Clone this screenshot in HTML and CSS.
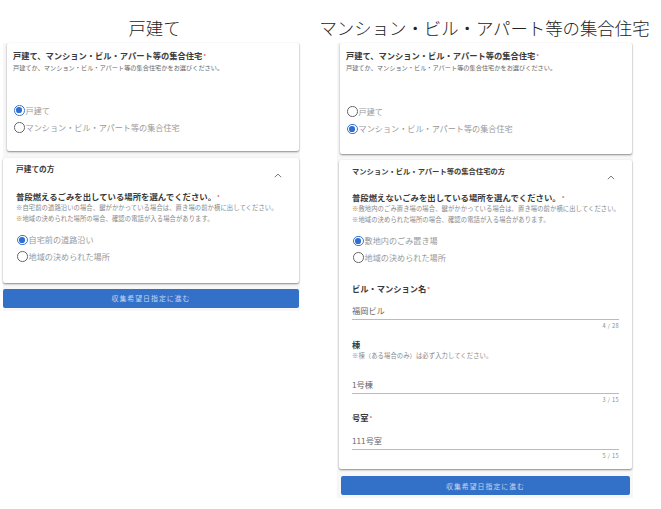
FILE: index.html
```html
<!DOCTYPE html>
<html lang="ja">
<head>
<meta charset="utf-8">
<title>戸建て / 集合住宅</title>
<link rel="stylesheet" href="styles.css">
</head>
<body>
<main class="page">
  <section class="col col-left">
    <h1 class="title">戸建て</h1>
    <div class="sheet">
      <div class="card card-type">
        <h2 class="q">戸建て、マンション・ビル・アパート等の集合住宅<span class="req">*</span></h2>
        <p class="sub">戸建てか、マンション・ビル・アパート等の集合住宅かをお選びください。</p>
        <div class="radios">
          <div class="radio on"><i class="dot"></i><span>戸建て</span></div>
          <div class="radio"><i class="dot"></i><span>マンション・ビル・アパート等の集合住宅</span></div>
        </div>
      </div>
      <div class="card panel">
        <div class="panel-head">
          <h3 class="panel-title">戸建ての方</h3>
          <svg class="chev" viewBox="0 0 10 6"><path d="M1 5 5 1.3 9 5"/></svg>
        </div>
        <h2 class="q q-big">普段燃えるごみを出している場所を選んでください。<span class="req">*</span></h2>
        <p class="note">※自宅前の道路沿いの場合、鍵がかかっている場合は、置き場の前か横に出してください。</p>
        <p class="note">※地域の決められた場所の場合、確認の電話が入る場合があります。</p>
        <div class="radios radios-panel">
          <div class="radio on"><i class="dot"></i><span>自宅前の道路沿い</span></div>
          <div class="radio"><i class="dot"></i><span>地域の決められた場所</span></div>
        </div>
      </div>
      <button class="next" type="button">収集希望日指定に進む</button>
    </div>
  </section>
  <section class="col col-right">
    <h1 class="title">マンション・ビル・アパート等の集合住宅</h1>
    <div class="sheet">
      <div class="card card-type tall">
        <h2 class="q">戸建て、マンション・ビル・アパート等の集合住宅<span class="req">*</span></h2>
        <p class="sub">戸建てか、マンション・ビル・アパート等の集合住宅かをお選びください。</p>
        <div class="radios">
          <div class="radio"><i class="dot"></i><span>戸建て</span></div>
          <div class="radio on"><i class="dot"></i><span>マンション・ビル・アパート等の集合住宅</span></div>
        </div>
      </div>
      <div class="card panel">
        <div class="panel-head">
          <h3 class="panel-title">マンション・ビル・アパート等の集合住宅の方</h3>
          <svg class="chev" viewBox="0 0 10 6"><path d="M1 5 5 1.3 9 5"/></svg>
        </div>
        <h2 class="q q-big">普段燃えないごみを出している場所を選んでください。<span class="req">*</span></h2>
        <p class="note">※敷地内のごみ置き場の場合、鍵がかかっている場合は、置き場の前か横に出してください。</p>
        <p class="note">※地域の決められた場所の場合、確認の電話が入る場合があります。</p>
        <div class="radios radios-panel">
          <div class="radio on"><i class="dot"></i><span>敷地内のごみ置き場</span></div>
          <div class="radio"><i class="dot"></i><span>地域の決められた場所</span></div>
        </div>
        <div class="field first">
          <h2 class="q">ビル・マンション名<span class="req">*</span></h2>
          <div class="input">福岡ビル</div>
          <div class="count">4 / 28</div>
        </div>
        <div class="field">
          <h2 class="q">棟</h2>
          <p class="note field-note">※棟（ある場合のみ）は必ず入力してください。</p>
          <div class="input spaced">1号棟</div>
          <div class="count">3 / 15</div>
        </div>
        <div class="field">
          <h2 class="q">号室<span class="req">*</span></h2>
          <div class="input">111号室</div>
          <div class="count">5 / 15</div>
        </div>
      </div>
      <button class="next" type="button">収集希望日指定に進む</button>
    </div>
  </section>
</main>
</body>
</html>
```
FILE: styles.css
```css
* { box-sizing: border-box; }
html, body { margin: 0; padding: 0; background: #fff; }
body {
  width: 661px;
  height: 509px;
  overflow: hidden;
  font-family: "Noto Sans CJK JP", "Noto Sans", sans-serif;
  color: #333;
}
h1, h2, h3, p { margin: 0; font-weight: normal; }
.page { display: flex; padding-left: 3px; gap: 37px; }
.col { display: flex; flex-direction: column; }
.col-left { width: 297px; }
.col-right { width: 296px; }
.title {
  height: 43px;
  padding-top: 15px;
  font-size: 17.4px;
  line-height: 25px;
  font-weight: 300;
  color: #222;
  text-align: center;
  white-space: nowrap;
}
.col-left .title { padding-left: 6px; }
.col-right .title { margin-left: -21px; margin-right: -20px; }
.sheet {
  background: #f7f7f7;
  display: flex;
  flex-direction: column;
  padding-bottom: 3px;
}
.card {
  background: #fff;
  border-radius: 2px;
  box-shadow: 0 1px 2px rgba(0, 0, 0, .45);
}
.card-type {
  margin: 0 1px 0 4px;
  height: 108px;
  padding: 7px 6px 0;
}
.card-type.tall { margin: 0 1px 0 3px; height: 111px; }
.q {
  font-size: 8.25px;
  line-height: 10px;
  font-weight: 700;
  color: #3a3a3a;
  white-space: nowrap;
}
.req { color: #e53935; font-size: 6px; margin-left: 1px; font-weight: 400; }
.sub { font-size: 6.2px; line-height: 9px; margin-top: 1px; color: #666; white-space: nowrap; }
.radios { display: flex; flex-direction: column; gap: 1.5px; margin-top: 30.5px; margin-left: 1px; }
.tall .radios { margin-top: 31.5px; margin-left: 1px; gap: 2px; }
.radio {
  display: flex;
  align-items: center;
  height: 15.5px;
  font-size: 8.15px;
  color: #999;
  white-space: nowrap;
}
.dot {
  flex: none;
  position: relative;
  width: 10.5px;
  height: 10.5px;
  border: 1.2px solid #666;
  border-radius: 50%;
  margin-right: 1px;
}
.radio.on .dot { border-color: #3a76d0; }
.radio.on .dot::after {
  content: "";
  position: absolute;
  inset: 1.4px;
  border-radius: 50%;
  background: #2f6fd0;
}
.panel { margin: 7px 1px 0 0; padding: 0 13px; }
.col-right .panel { margin: 6px 1px 0 2px; padding: 0 13px; }
.col-left .panel { height: 125px; }
.col-right .panel { height: 309px; }
.panel-head { display: flex; justify-content: space-between; height: 33px; padding-top: 6px; }
.col-right .panel-head { height: 32px; }
.panel-title { font-size: 7.7px; line-height: 10px; font-weight: 700; white-space: nowrap; color: #3a3a3a; }
.col-right .panel-title { font-size: 7.3px; }
.chev { width: 8px; height: 5px; margin: 9px 4px 0 0; }
.chev path { fill: none; stroke: #666; stroke-width: 1.1; }
.q.q-big { font-size: 8.4px; line-height: 11px; }
.q-big + .note { margin-top: -1px; }
.note { font-size: 6.3px; line-height: 11px; color: #888; white-space: nowrap; letter-spacing: .1px; }
.radios-panel { margin-top: 8px; margin-left: 1px; gap: 1px; }
.field:not(.first) { margin-top: 7.5px; }
.field.first { margin-top: 17.5px; }
.field-note { margin-top: 1px; }
.input {
  height: 18px;
  margin-top: 7.5px;
  border-bottom: 1px solid #bbb;
  font-size: 8.2px;
  line-height: 16px;
  color: #666;
}
.input.spaced { margin-top: 15px; }
.count { font-size: 5.6px; line-height: 9px; margin-top: 2px; color: #888; text-align: right; letter-spacing: .4px; }
.next {
  display: block;
  height: 18.5px;
  margin: 6px 1px 0 0;
  padding: 0;
  border: 0;
  border-radius: 2px;
  background: #3371c9;
  color: #c3d4ee;
  font-family: inherit;
  font-size: 6.9px;
  letter-spacing: 1px;
  text-align: center;
}
.col-right .next { margin: 7px 3px 0 4px; height: 19px; }
```
